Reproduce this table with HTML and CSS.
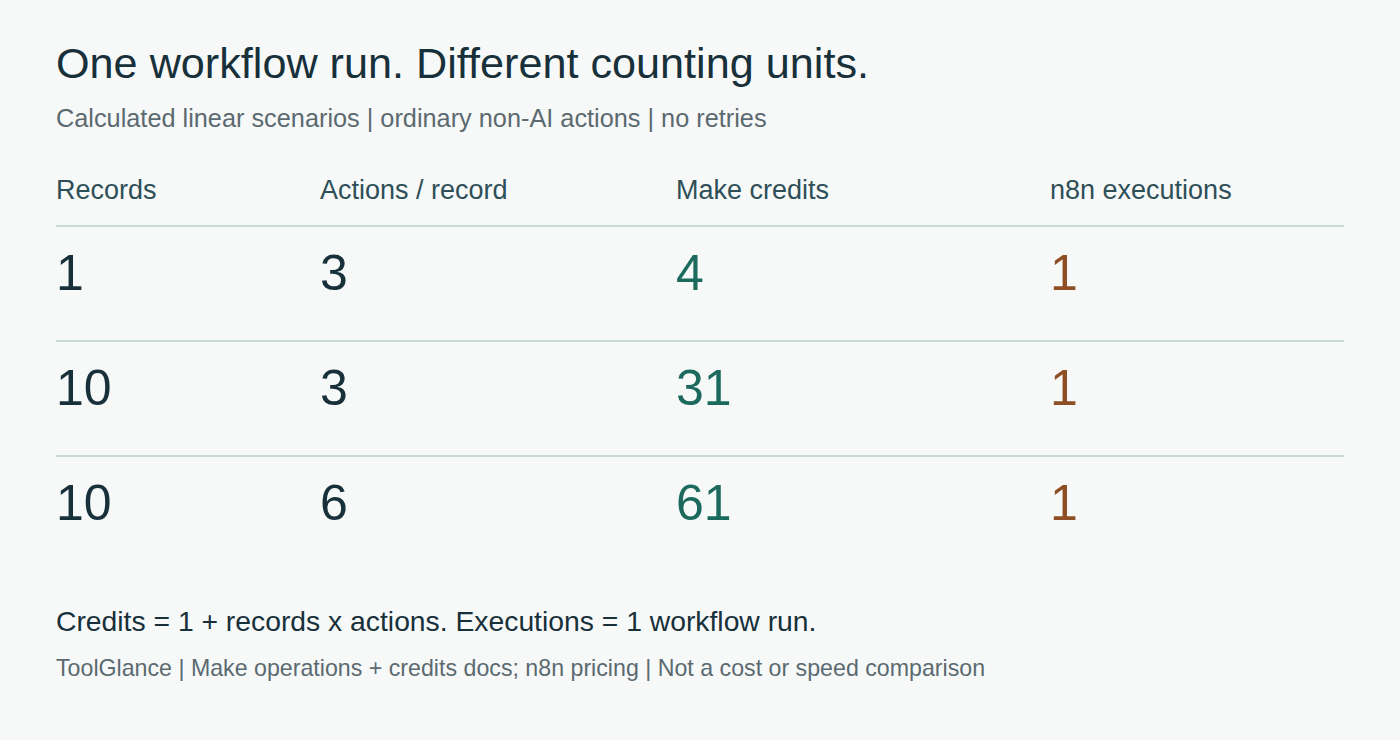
FILE: index.html
```html
<!DOCTYPE html>
<html lang="en">
<head>
<meta charset="utf-8">
<title>One workflow run. Different counting units.</title>
<link rel="stylesheet" href="styles.css">
</head>
<body>
<main class="card">
  <h1 class="title">One workflow run. Different counting units.</h1>
  <p class="subtitle">Calculated linear scenarios | ordinary non-AI actions | no retries</p>
  <div class="table">
    <div class="row head">
      <div>Records</div>
      <div>Actions / record</div>
      <div>Make credits</div>
      <div>n8n executions</div>
    </div>
    <div class="row data">
      <div>1</div>
      <div>3</div>
      <div class="credits">4</div>
      <div class="execs">1</div>
    </div>
    <div class="row data">
      <div>10</div>
      <div>3</div>
      <div class="credits">31</div>
      <div class="execs">1</div>
    </div>
    <div class="row data">
      <div>10</div>
      <div>6</div>
      <div class="credits">61</div>
      <div class="execs">1</div>
    </div>
  </div>
  <p class="note">Credits = 1 + records x actions. Executions = 1 workflow run.</p>
  <p class="source">ToolGlance | Make operations + credits docs; n8n pricing | Not a cost or speed comparison</p>
</main>
</body>
</html>
```

FILE: styles.css
```css
html, body {
  margin: 0;
  padding: 0;
  background: #f7f9f9;
}
body {
  font-family: "Liberation Sans", Arial, sans-serif;
  color: #17303a;
  width: 1400px;
  height: 740px;
  overflow: hidden;
}
.card {
  padding: 39px 56px 0 56px;
}
.title {
  margin: 0;
  font-size: 43.2px;
  font-weight: 400;
  line-height: 48px;
  color: #17303a;
}
.subtitle {
  margin: 17px 0 0 0;
  font-size: 25.3px;
  line-height: 28px;
  color: #5b6a70;
}
.table {
  margin-top: 43px;
}
.row {
  display: grid;
  grid-template-columns: 264px 356px 374px 1fr;
}
.head {
  font-size: 27px;
  line-height: 30px;
  color: #2e4f57;
  padding-bottom: 20px;
  border-bottom: 2px solid #c9d9d9;
}
.data {
  font-size: 50px;
  line-height: 58px;
  color: #17303a;
  padding: 17px 0 38px 0;
}
.data + .data {
  border-top: 2px solid #c9d9d9;
}
.credits {
  color: #1b6a5d;
}
.execs {
  color: #8f4f24;
}
.note {
  margin: 35px 0 0 0;
  font-size: 28.3px;
  line-height: 32px;
  color: #17303a;
}
.source {
  margin: 17px 0 0 0;
  font-size: 23.2px;
  line-height: 28px;
  color: #5b6a70;
}
```
